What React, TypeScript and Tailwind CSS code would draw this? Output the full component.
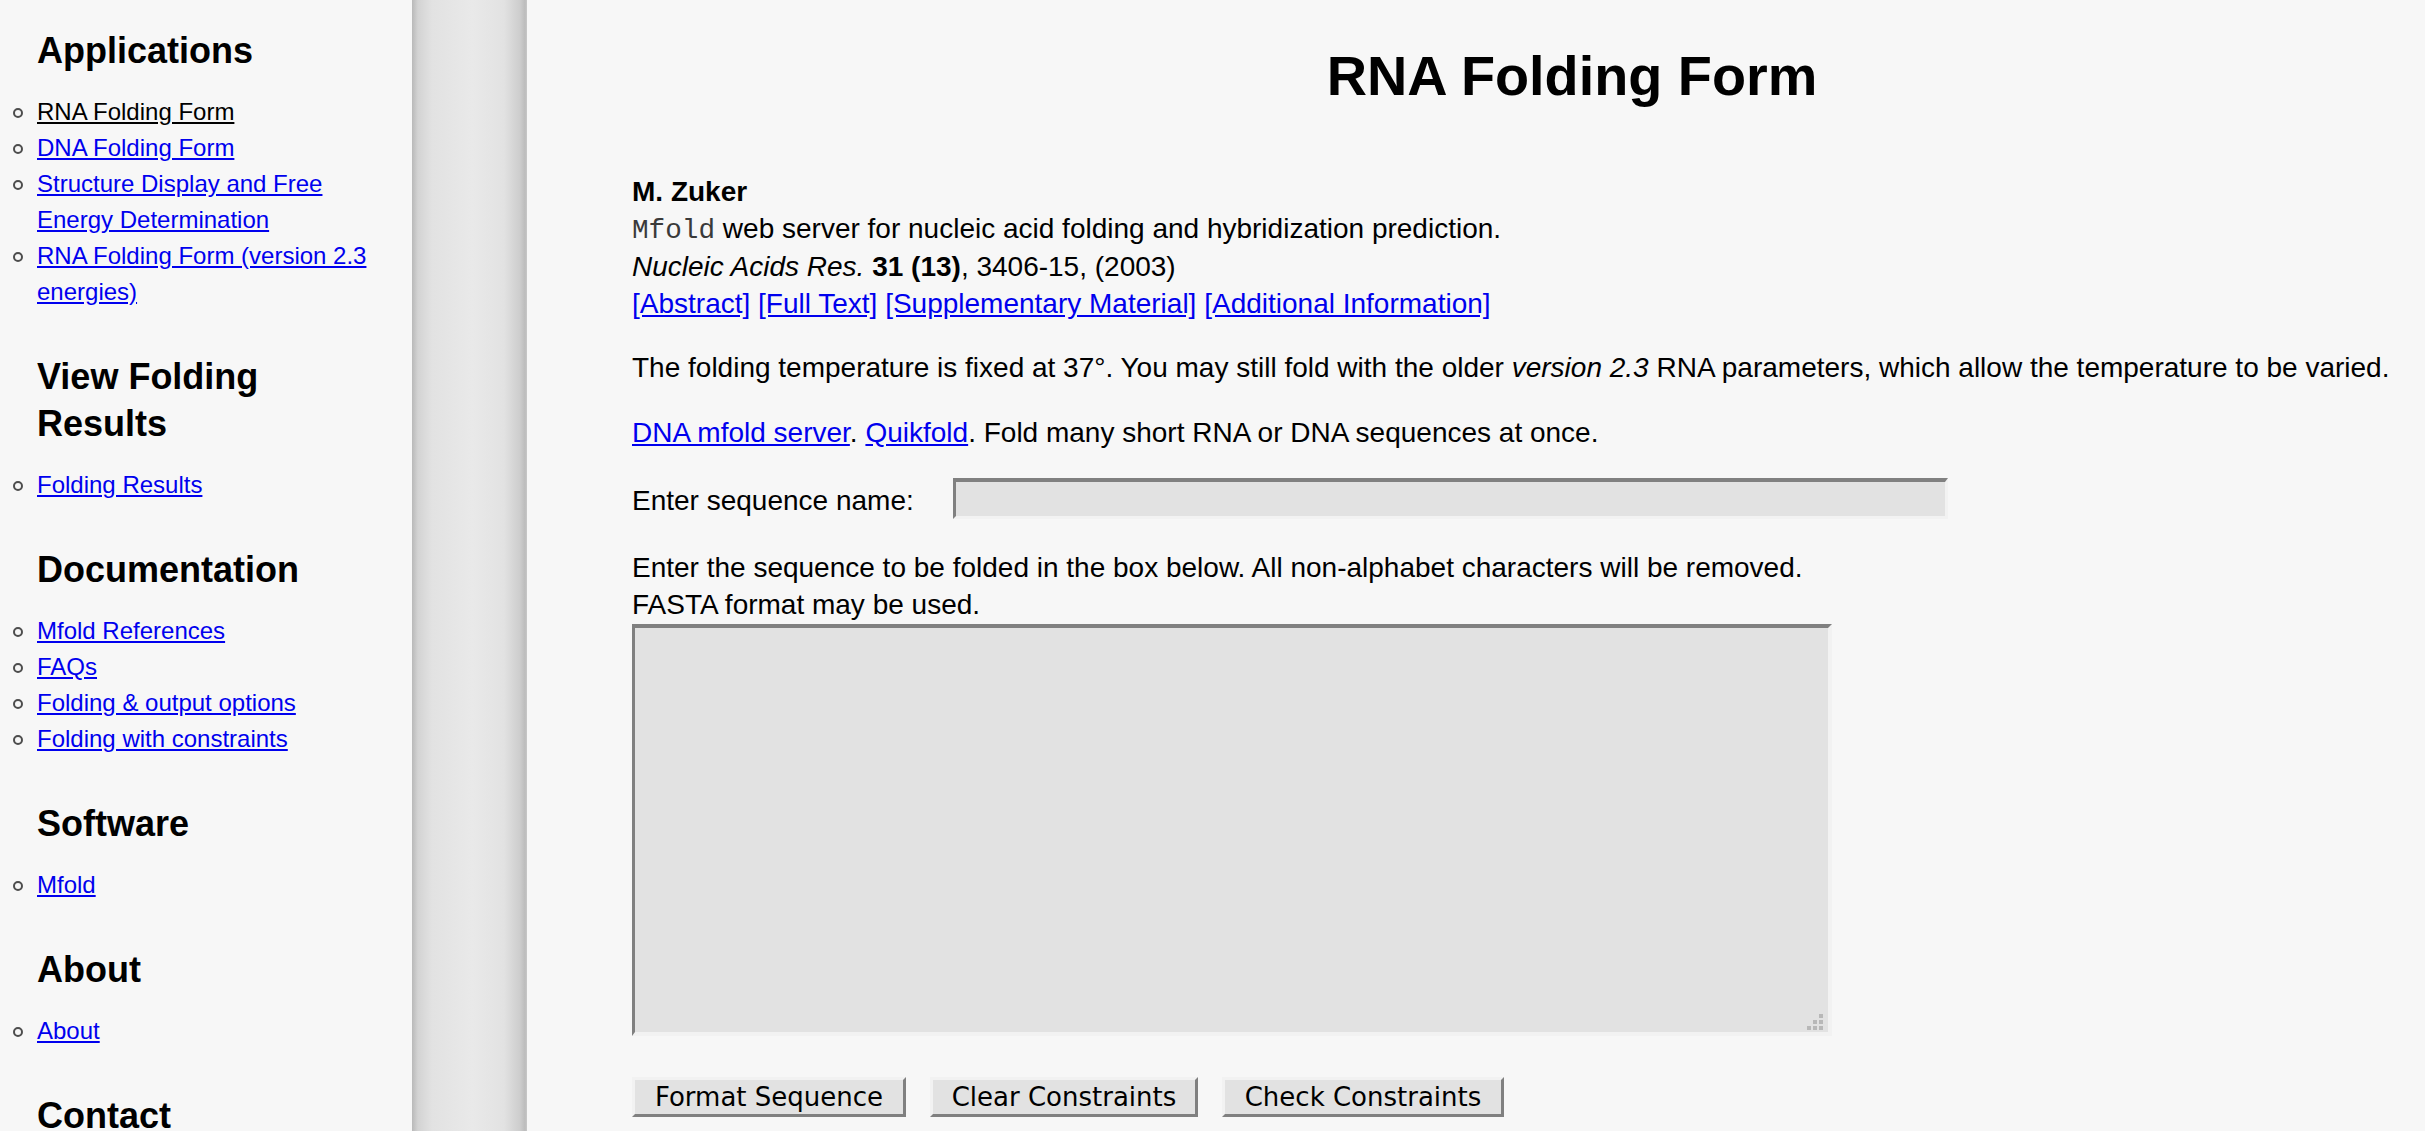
import React from 'react';

type NavLink = { label: string; current?: boolean };
type NavSection = { title: string; links: NavLink[] };

const navSections: NavSection[] = [
  {
    title: 'Applications',
    links: [
      { label: 'RNA Folding Form', current: true },
      { label: 'DNA Folding Form' },
      { label: 'Structure Display and Free Energy Determination' },
      { label: 'RNA Folding Form (version 2.3 energies)' },
    ],
  },
  { title: 'View Folding Results', links: [{ label: 'Folding Results' }] },
  {
    title: 'Documentation',
    links: [
      { label: 'Mfold References' },
      { label: 'FAQs' },
      { label: 'Folding & output options' },
      { label: 'Folding with constraints' },
    ],
  },
  { title: 'Software', links: [{ label: 'Mfold' }] },
  { title: 'About', links: [{ label: 'About' }] },
  { title: 'Contact', links: [{ label: 'Contact' }] },
];

const Sidebar: React.FC = () => (
  <aside className="w-[412px] shrink-0 pt-[27px] pr-[27px]">
    {navSections.map((section, i) => (
      <div key={section.title} className={i > 0 ? 'mt-[43px]' : ''}>
        <h2 className="pl-[37px] text-[36px] leading-[47px] font-bold text-black">{section.title}</h2>
        <ul className="mt-[20px]">
          {section.links.map(link => (
            <li key={link.label} className="flex text-[24px] leading-[36px]">
              <span className="mt-[14px] ml-[13px] mr-[14px] w-[10px] h-[10px] shrink-0 rounded-full border-2 border-[#4d4d4d]" />
              <a
                href="#"
                className={link.current ? 'text-black underline' : 'text-[#0000ee] underline'}
              >
                {link.label}
              </a>
            </li>
          ))}
        </ul>
      </div>
    ))}
  </aside>
);

const linkCls = 'text-[#0000ee] underline';

const RnaForm: React.FC = () => (
  <main className="flex-1 min-w-0 pl-[105px] pt-[44px] text-[28px] leading-[36.6px] text-black">
    <h1 className="pl-[87px] text-center text-[55.8px] leading-[64px] font-bold">RNA Folding Form</h1>

    {/* Citation */}
    <div className="mt-[66px]">
      <div className="font-bold">M. Zuker</div>
      <div>
        <span className="font-['Liberation_Mono',monospace] text-[27.7px] text-[#3a3a3a]">Mfold</span> web server
        for nucleic acid folding and hybridization prediction.
      </div>
      <div>
        <i>Nucleic Acids Res.</i> <b>31 (13)</b>, 3406-15, (2003)
      </div>
      <div>
        <a href="#" className={linkCls}>[Abstract]</a>{' '}
        <a href="#" className={linkCls}>[Full Text]</a>{' '}
        <a href="#" className={linkCls}>[Supplementary Material]</a>{' '}
        <a href="#" className={linkCls}>[Additional Information]</a>
      </div>
    </div>

    <p className="mt-[28px] whitespace-nowrap">
      The folding temperature is fixed at 37°. You may still fold with the older <i>version 2.3</i> RNA
      parameters, which allow the temperature to be varied.
    </p>

    <p className="mt-[28px]">
      <a href="#" className={linkCls}>DNA mfold server</a>.{' '}
      <a href="#" className={linkCls}>Quikfold</a>. Fold many short RNA or DNA sequences at once.
    </p>

    <div className="mt-[26px] flex items-start">
      <label className="mt-[5px] w-[321px] shrink-0">Enter sequence name:</label>
      <input
        type="text"
        className="w-[995px] h-[41px] bg-[#e2e2e2] border-solid border-t-4 border-l-[3px] border-r-[3px] border-b-[3px] border-t-[#808080] border-l-[#808080] border-r-[#f2f2f2] border-b-[#f2f2f2] outline-none px-2"
      />
    </div>

    <p className="mt-[31px]">
      Enter the sequence to be folded in the box below. All non-alphabet characters will be removed.
      <br />
      FASTA format may be used.
    </p>

    <div className="relative mt-px w-[1200px] h-[412px]">
      <textarea className="block w-full h-full resize-none bg-[#e2e2e2] border-solid border-t-4 border-l-[3px] border-r-4 border-b-4 border-t-[#808080] border-l-[#808080] border-r-[#f2f2f2] border-b-[#f2f2f2] outline-none" />
      {/* resize grip */}
      <svg className="absolute right-[9px] bottom-[6px]" width="16" height="16" viewBox="0 0 16 16">
        <rect x="12" y="0" width="4" height="4" fill="#b8b8b8" />
        <rect x="6" y="6" width="4" height="4" fill="#b8b8b8" />
        <rect x="12" y="6" width="4" height="4" fill="#b8b8b8" />
        <rect x="0" y="12" width="4" height="4" fill="#b8b8b8" />
        <rect x="6" y="12" width="4" height="4" fill="#b8b8b8" />
        <rect x="12" y="12" width="4" height="4" fill="#b8b8b8" />
      </svg>
    </div>

    <div className="mt-[41px] flex gap-[24px] font-['DejaVu_Sans',sans-serif] text-[26px]">
      {[
        { label: 'Format Sequence', w: 'w-[274px]' },
        { label: 'Clear Constraints', w: 'w-[268px]' },
        { label: 'Check Constraints', w: 'w-[282px]' },
      ].map(b => (
        <button
          key={b.label}
          className={`${b.w} h-[40px] leading-[30px] bg-[#e2e2e2] text-black border-[3px] border-solid border-t-[#f2f2f2] border-l-[#f2f2f2] border-r-[#808080] border-b-[#808080]`}
        >
          {b.label}
        </button>
      ))}
    </div>
  </main>
);

export default function App() {
  return (
    <div className="h-screen overflow-hidden flex bg-[#f7f7f7] font-['Liberation_Sans',Arial,sans-serif] text-black">
      <Sidebar />
      {/* shaded page gutter */}
      <div className="w-[115px] shrink-0 bg-[linear-gradient(to_right,#b9b9b9_0px,#d3d3d3_6px,#e2e2e2_20px,#e9e9e9_60px,#e2e2e2_92px,#cdcdcd_108px,#bcbcbc_113px,#c8c8c8_115px)]" />
      <RnaForm />
    </div>
  );
}
